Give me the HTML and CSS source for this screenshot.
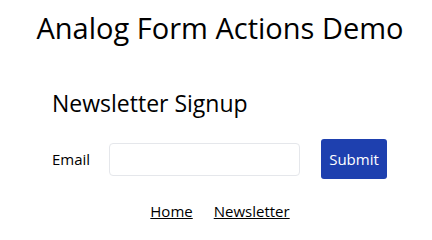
FILE: index.html
```html
<!DOCTYPE html>
<html lang="en">
<head>
<meta charset="utf-8">
<title>Analog Form Actions Demo</title>
<link rel="stylesheet" href="styles.css">
</head>
<body>
<main class="page">
  <h1 class="title">Analog Form Actions Demo</h1>
  <section class="signup">
    <h2 class="signup-title">Newsletter Signup</h2>
    <form class="signup-form">
      <label class="field-label" for="email">Email</label>
      <input class="field-input" id="email" type="email" name="email">
      <button class="submit-btn" type="submit">Submit</button>
    </form>
  </section>
  <nav class="links">
    <a href="#" class="link">Home</a>
    <a href="#" class="link">Newsletter</a>
  </nav>
</main>
</body>
</html>
```
FILE: styles.css
```css
html, body {
  margin: 0;
  padding: 0;
  background: #ffffff;
}
body {
  font-family: "Open Sans", "Noto Sans", sans-serif;
  color: #000000;
}
.page {
  display: flex;
  flex-direction: column;
  padding-left: 8px;
}
.title {
  margin: 10px 0 0;
  font-size: 29px;
  line-height: 36px;
  font-weight: 400;
  text-align: center;
}
.signup {
  margin-top: 42px;
  padding-left: 44px;
  display: flex;
  flex-direction: column;
}
.signup-title {
  margin: 0;
  font-size: 23px;
  line-height: 30px;
  font-weight: 400;
}
.signup-form {
  margin-top: 21px;
  display: flex;
  align-items: center;
}
.field-label {
  font-size: 15px;
  width: 57px;
}
.field-input {
  box-sizing: border-box;
  width: 191px;
  height: 33px;
  border: 1px solid #e5e7eb;
  border-radius: 4px;
  margin: 0 21px 0 0;
  padding: 0 8px;
  font: inherit;
}
.submit-btn {
  box-sizing: border-box;
  width: 66px;
  height: 40px;
  border: none;
  border-radius: 3px;
  background: #1e40af;
  color: #ffffff;
  font-family: inherit;
  font-size: 15px;
  padding: 0;
}
.links {
  margin-top: 22px;
  display: flex;
  justify-content: center;
  gap: 21px;
}
.link {
  color: #000000;
  font-size: 15px;
  line-height: 20px;
  text-decoration: underline;
}
```
